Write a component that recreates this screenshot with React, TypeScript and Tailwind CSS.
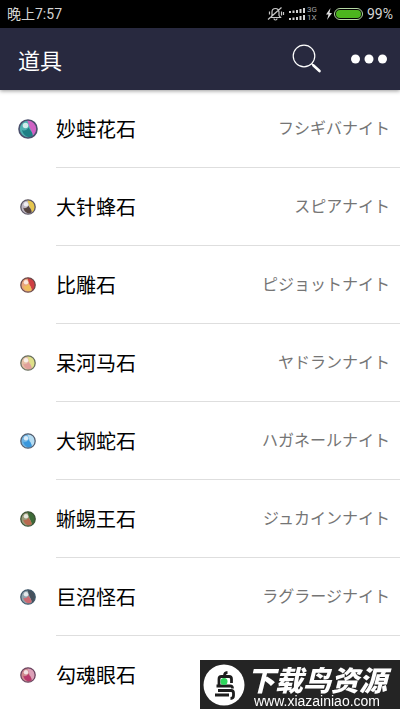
type Stone = {
  name: string;
  kana?: string;
  size?: number;
  rim: string;
  base: string;
  swirl: string;
  core: string;
};

const stones: Stone[] = [
  { name: '妙蛙花石', kana: 'フシギバナイト', size: 20, rim: '#4a4f6c', base: '#4fb0b0', swirl: '#cf62c4', core: '#1f7f85' },
  { name: '大针蜂石', kana: 'スピアナイト', rim: '#5d5866', base: '#bdb6c2', swirl: '#e6c64e', core: '#54433f' },
  { name: '比雕石', kana: 'ピジョットナイト', rim: '#6b4a4a', base: '#e9a57c', swirl: '#cf3f43', core: '#efbd5c' },
  { name: '呆河马石', kana: 'ヤドランナイト', rim: '#6a7060', base: '#e6c0a6', swirl: '#dfe089', core: '#e0a09a' },
  { name: '大钢蛇石', kana: 'ハガネールナイト', rim: '#555f70', base: '#6fb4e4', swirl: '#b5dcf2', core: '#3a97dc' },
  { name: '蜥蜴王石', kana: 'ジュカインナイト', rim: '#3d5236', base: '#9a9a78', swirl: '#3d6b38', core: '#b86a50' },
  { name: '巨沼怪石', kana: 'ラグラージナイト', rim: '#41596b', base: '#8fa3ad', swirl: '#46515c', core: '#cc6a72' },
  { name: '勾魂眼石', rim: '#6b4560', base: '#d08a8f', swirl: '#dca0b8', core: '#b8396c' },
];

function StoneIcon({ stone }: { stone: Stone }) {
  const size = stone.size ?? 16;

  return (
    <svg width={size} height={size} viewBox="0 0 20 20" aria-hidden="true">
      <circle cx="10" cy="10" r="9" fill={stone.base} />
      <path d="M9 1C14 .5 19 4 19 10c0 3-1.500 5.500-4 7.300C14.500 13 12.500 11 11.500 8 10.800 5.500 10 3 9 1Z" fill={stone.swirl} />
      <path d="M4 11c2.500 1.500 5 0 6.500-2.500C12 11.500 15 13 14.500 17 11 19.500 5.500 17.500 4 11Z" fill={stone.core} />
      <circle cx="7.500" cy="6.500" r="2.800" fill="#fff" opacity="0.75" />
      <circle cx="10" cy="10" r="9" fill="none" stroke={stone.rim} strokeWidth="1.600" />
    </svg>
  );
}

function StatusBar() {
  return (
    <div className="flex h-7 shrink-0 items-center justify-between bg-black px-[7px] text-sm text-[#d4d4d4]">
      <span>晚上7:57</span>
      <div className="flex items-center">
        <svg width="18" height="16" viewBox="0 0 18 16" fill="none" stroke="#c8c8c8" strokeWidth="1.200" aria-hidden="true">
          <path d="M4 11.500h9.500L12 9.500V6a3.500 3.500 0 0 0-7 0v3.500L3.500 11.500M7 12.500a1.500 1.500 0 0 0 3 0M14.500 5.500v4M16.500 6v3M2.500 5.500v3M1 13.500 14.500 1.500" />
        </svg>
        <svg className="ml-1" width="17" height="14" viewBox="0 0 17 14" fill="#d4d4d4" aria-hidden="true">
          <path d="M0 4h2v2H0zM3.500 3.500h2V6h-2zM7 3h2v3H7zM10.500 2h2v4h-2zM14 1h2v5h-2zM0 11h2v2H0zM3.500 10.500h2V13h-2zM7 10h2v3H7zM10.500 9h2v4h-2zM14 8h2v5h-2z" />
        </svg>
        <div className="ml-px flex w-3 flex-col text-[8px] leading-2 text-[#a0a0a0]">
          <span>3G</span>
          <span>1X</span>
        </div>
        <svg className="ml-1.5" width="9" height="12" viewBox="0 0 9 12" fill="#e0e0e0" aria-hidden="true">
          <path d="M5.500 0 1 6.500h2.500L2 12l5-7H4.500Z" />
        </svg>
        <div className="h-3 w-[29px] rounded-full border border-[#b5d8a5] p-px">
          <div className="h-full w-full rounded-full bg-[#4cb51e]" />
        </div>
        <span className="ml-1">99%</span>
      </div>
    </div>
  );
}

function Header() {
  return (
    <header className="z-10 flex h-[62px] shrink-0 items-center justify-between bg-[#28293f] pr-3 pl-[18px] shadow-[0_1px_4px_rgba(0,0,0,0.4)]">
      <h1 className="font-['Noto_Sans_CJK_SC',sans-serif] text-[22px] leading-8 text-white">道具</h1>
      <div className="flex items-center gap-7">
        <button type="button" aria-label="搜索">
          <svg width="32" height="30" viewBox="0 0 32 30" fill="none" stroke="#fff" strokeLinecap="round" aria-hidden="true">
            <circle cx="14" cy="12" r="10.800" strokeWidth="1.200" />
            <path d="m22 20 1.500 1.500" strokeWidth="1.500" />
            <path d="m23.500 21.500 6 5.500" strokeWidth="2.600" />
          </svg>
        </button>
        <button type="button" aria-label="更多">
          <svg width="38" height="10" viewBox="0 0 38 10" fill="#fff" aria-hidden="true">
            <circle cx="5.500" cy="5" r="4.500" />
            <circle cx="19" cy="5" r="4.500" />
            <circle cx="32.500" cy="5" r="4.500" />
          </svg>
        </button>
      </div>
    </header>
  );
}

function StoneRow({ stone }: { stone: Stone }) {
  return (
    <li className="flex h-[78px] items-center">
      <div className="flex w-14 shrink-0 justify-center">
        <StoneIcon stone={stone} />
      </div>
      <div className="flex h-full flex-1 items-center justify-between border-b border-[#dedede] pr-2.5">
        <span className="font-['Noto_Sans_CJK_SC',sans-serif] text-xl text-black">{stone.name}</span>
        {stone.kana ? (
          <span lang="ja" className="font-[Roboto,'Noto_Sans_CJK_JP',sans-serif] text-base text-[#757575]">
            {stone.kana}
          </span>
        ) : null}
      </div>
    </li>
  );
}

function SiteBadge() {
  return (
    <a
      href="#"
      className="fixed right-0 bottom-[2px] z-20 flex h-[49px] w-[200px] items-center gap-0.5 bg-[#242424] pl-[3px] text-white"
    >
      <svg className="shrink-0" width="42" height="42" viewBox="0 0 42 42" fill="none" aria-hidden="true">
        <circle cx="21" cy="21" r="20.500" fill="#fff" />
        <path
          d="M21.500 11.500c0-2 .8-3 3-3.200M16 22V15c0-1.800.8-2.500 2.500-2.500h7.500c1.800 0 2.500.7 2.500 2.500v4M13.500 22H27c2 0 2.500.5 2.500 2.500M15 26.500h13c1.800 0 2.500.8 2.500 2.500v2.500c0 2-1 3-3 3M12 31h14"
          stroke="#1d1d1d"
          strokeWidth="2.800"
        />
        <circle cx="21" cy="17.500" r="3.500" fill="#2ed65b" />
      </svg>
      <span className="flex flex-col items-center pt-1">
        <span className="font-['Noto_Sans_CJK_SC',sans-serif] text-[28px] leading-7 font-black italic">下载鸟资源</span>
        <span className="font-['Liberation_Sans',sans-serif] text-sm leading-4">www.xiazainiao.com</span>
      </span>
    </a>
  );
}

export default function App() {
  return (
    <div className="flex h-screen flex-col overflow-hidden bg-white font-[Roboto,'Noto_Sans_CJK_SC',sans-serif]">
      <StatusBar />
      <Header />
      <ul className="min-h-0 flex-1 overflow-y-auto [scrollbar-width:none]">
        {stones.map((stone) => (
          <StoneRow key={stone.name} stone={stone} />
        ))}
      </ul>
      <SiteBadge />
    </div>
  );
}
